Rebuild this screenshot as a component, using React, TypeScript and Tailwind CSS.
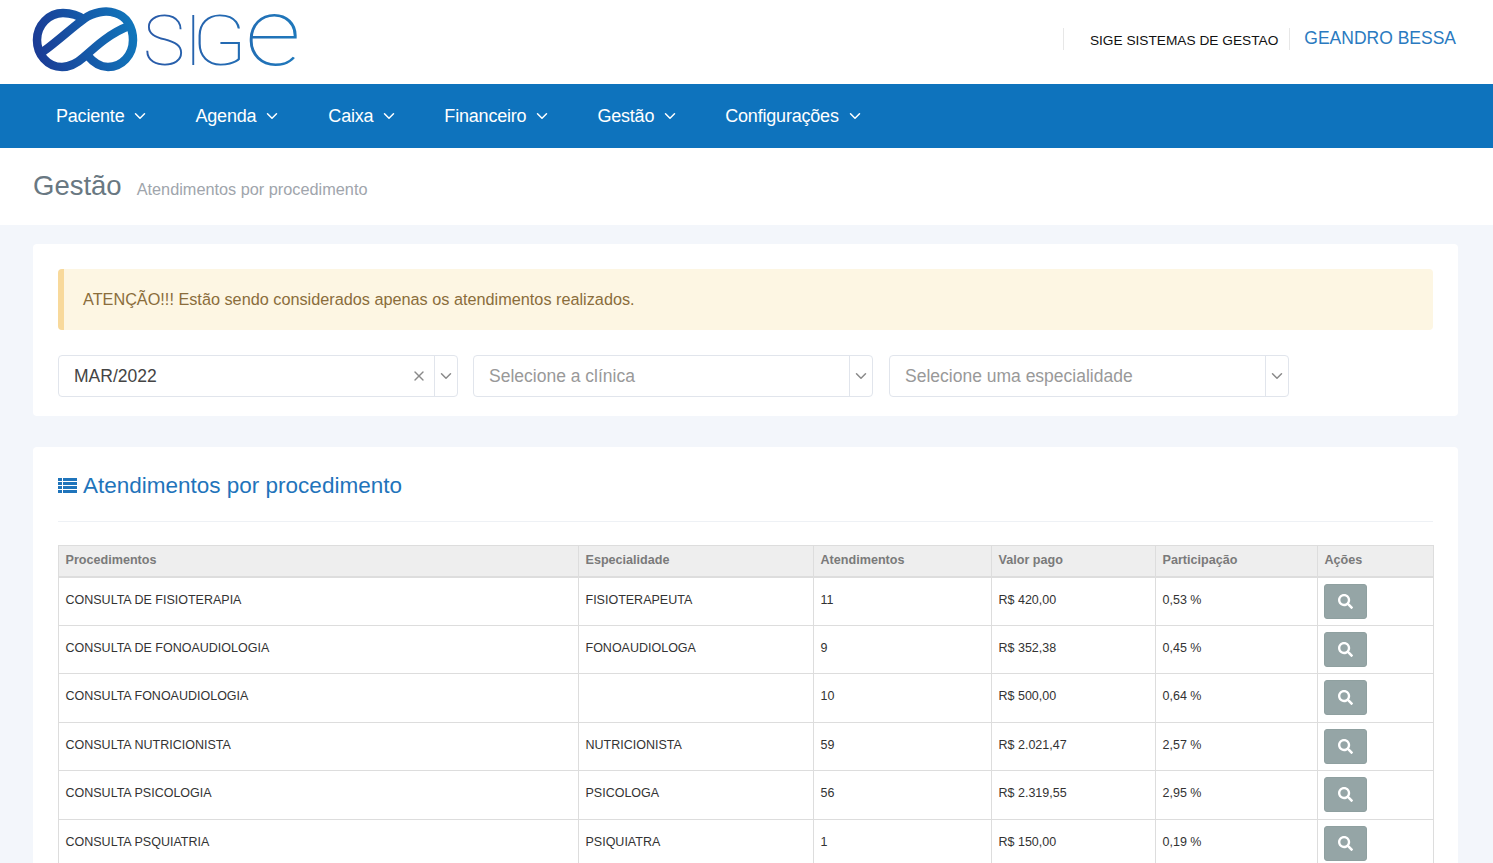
import { ChevronDown, X } from "lucide-react";
import { FaSearch } from "react-icons/fa";

const navItems: [string, string][] = [
  ["Paciente", "mr-[46px]"],
  ["Agenda", "mr-[47px]"],
  ["Caixa", "mr-[46px]"],
  ["Financeiro", "mr-[46px]"],
  ["Gestão", "mr-[46px]"],
  ["Configurações", ""],
];

const rows = [
  ["CONSULTA DE FISIOTERAPIA", "FISIOTERAPEUTA", "11", "R$ 420,00", "0,53 %"],
  ["CONSULTA DE FONOAUDIOLOGIA", "FONOAUDIOLOGA", "9", "R$ 352,38", "0,45 %"],
  ["CONSULTA FONOAUDIOLOGIA", "", "10", "R$ 500,00", "0,64 %"],
  ["CONSULTA NUTRICIONISTA", "NUTRICIONISTA", "59", "R$ 2.021,47", "2,57 %"],
  ["CONSULTA PSICOLOGIA", "PSICOLOGA", "56", "R$ 2.319,55", "2,95 %"],
  ["CONSULTA PSQUIATRIA", "PSIQUIATRA", "1", "R$ 150,00", "0,19 %"],
];

function Logo() {
  return (
    <svg width="270" height="70" viewBox="30 4 270 70" className="mb-[6px] block overflow-visible">
      <defs>
        <linearGradient id="lg" gradientUnits="userSpaceOnUse" x1="33" y1="50" x2="137" y2="30">
          <stop offset="0" stopColor="#1b3a94" />
          <stop offset="1" stopColor="#1077bc" />
        </linearGradient>
        <linearGradient id="lt" gradientUnits="userSpaceOnUse" x1="145" y1="40" x2="296" y2="40">
          <stop offset="0" stopColor="#2a5aa8" />
          <stop offset="1" stopColor="#1f78bb" />
        </linearGradient>
      </defs>
      <g fill="none" stroke="url(#lg)" strokeWidth="8.5">
        <path d="M41 53 C52 46 75 25 84 19 C93 12 106 10 115 13 C127 16 133 28 133 40 C133 55 122 67 108 67 C99 67 93 62 88 56" />
        <path d="M129 26 C110 33 95 47 84 57 C75 65 68 67 62 67 C47 67 37 54 37 40 C37 25 49 13 63 13 C72 13 78 15 85 20" />
      </g>
      <g fill="url(#lt)" fontFamily="Roboto, sans-serif" fontWeight="100" fontSize="71">
        <text x="143" y="65">S</text>
        <text x="184" y="65">I</text>
        <text x="192" y="65" textLength="55" lengthAdjust="spacingAndGlyphs">G</text>
        <text x="245" y="65" fontSize="94" textLength="56" lengthAdjust="spacingAndGlyphs">e</text>
      </g>
    </svg>
  );
}

function ListIcon() {
  return (
    <svg width="19" height="15" viewBox="0 0 19 15" fill="currentColor" className="block">
      <rect x="0" y="0" width="4" height="3" />
      <rect x="5" y="0" width="14" height="3" />
      <rect x="0" y="4" width="4" height="3" />
      <rect x="5" y="4" width="14" height="3" />
      <rect x="0" y="8" width="4" height="3" />
      <rect x="5" y="8" width="14" height="3" />
      <rect x="0" y="12" width="4" height="3" />
      <rect x="5" y="12" width="14" height="3" />
    </svg>
  );
}

function Select({ label, placeholder, clear, className }: { label: string; placeholder?: boolean; clear?: boolean; className: string }) {
  return (
    <div className={`flex h-[42px] w-[400px] items-center rounded border border-[#e1e5ec] bg-white ${className}`}>
      <span className={`flex-1 pl-[15px] text-[17.5px] ${placeholder ? "text-[#999999]" : "text-[#444444]"}`}>{label}</span>
      {clear && <X className="mr-[7px] h-[16px] w-[16px] text-[#8a8a8a]" strokeWidth={2} />}
      <span className="flex h-full w-[23px] items-center justify-center border-l border-[#e1e5ec]">
        <ChevronDown className="h-[18px] w-[18px] text-[#8a8a8a]" strokeWidth={2} />
      </span>
    </div>
  );
}

const th = "border border-[#dddddd] border-b-[2px] bg-[#eeeeee] pb-[1px] px-[6.5px] text-left text-[12.6px] font-bold text-[#7a7a7a] h-[31px] align-middle";
const td = "border border-[#dddddd] px-[6.5px] text-[12.5px] text-[#333333] align-middle h-[48.5px]";

export default function App() {
  return (
    <div className="h-screen overflow-hidden bg-[#f3f6fb] font-['Liberation_Sans',Arial,sans-serif]">
      <header className="flex h-[84px] items-center justify-between bg-white pl-[30px] pr-[37px]">
        <Logo />
        <div className="mb-[6px] flex items-center">
          <span className="flex h-[22px] items-center border-l border-[#e7e7e7] pl-[26px] pr-[11px] pt-[5px] text-[13.7px] text-[#111111]">SIGE SISTEMAS DE GESTAO</span>
          <span className="flex h-[22px] items-center border-l border-[#e7e7e7] pb-[1px] pl-[14px] text-[17.5px] leading-none text-[#2a7ac0]">GEANDRO BESSA</span>
        </div>
      </header>
      <nav className="flex h-[64px] items-center bg-[#0e73bd] pl-[56px] text-[18px] tracking-[-0.2px] text-white">
        {navItems.map(([name, cls]) => (
          <div key={name} className={`flex items-center ${cls}`}>
            <span>{name}</span>
            <ChevronDown className="ml-[7px] h-[18px] w-[18px]" strokeWidth={2} />
          </div>
        ))}
      </nav>
      <div className="flex h-[77px] items-center bg-white pb-[2px] pl-[33px]">
        <span className="text-[27.5px] text-[#697882]">Gestão</span>
        <span className="ml-[15px] mt-[7px] text-[16.3px] text-[#a0a5ac]">Atendimentos por procedimento</span>
      </div>
      <main className="px-[33px] pr-[35px] pt-[19px]">
        <section className="rounded bg-white px-[25px] pt-[25px] pb-[19px]">
          <div className="flex h-[61px] items-center rounded-sm border-l-[6px] border-[#f8d99b] bg-[#fdf6e3] pl-[19px] text-[16.25px] text-[#8a6d3b]">
            ATENÇÃO!!! Estão sendo considerados apenas os atendimentos realizados.
          </div>
          <div className="mt-[25px] flex">
            <Select label="MAR/2022" clear className="" />
            <Select label="Selecione a clínica" placeholder className="ml-[15px]" />
            <Select label="Selecione uma especialidade" placeholder className="ml-[16px]" />
          </div>
        </section>
        <section className="mt-[31px] rounded bg-white px-[25px] pb-[25px]">
          <div className="flex h-[75px] items-center border-b border-[#eef1f5] pt-[3px] text-[#1f74bb]">
            <ListIcon />
            <span className="ml-[6px] text-[22.5px]">Atendimentos por procedimento</span>
          </div>
          <table className="mt-[23px] w-[1375px] table-fixed border-collapse">
            <colgroup>
              <col className="w-[520px]" />
              <col className="w-[235px]" />
              <col className="w-[178px]" />
              <col className="w-[164px]" />
              <col className="w-[162px]" />
              <col className="w-[116px]" />
            </colgroup>
            <thead>
              <tr>
                {["Procedimentos", "Especialidade", "Atendimentos", "Valor pago", "Participação", "Ações"].map((h) => (
                  <th key={h} className={th}>{h}</th>
                ))}
              </tr>
            </thead>
            <tbody>
              {rows.map((r) => (
                <tr key={r[0]}>
                  {r.map((c, i) => (
                    <td key={i} className={`${td} pb-[2px]`}>{c}</td>
                  ))}
                  <td className={td}>
                    <button className="-ml-[1px] flex h-[35px] w-[43px] items-center justify-center rounded-[3px] border border-[#8fa0a0] bg-[#95a5a6] text-white">
                      <FaSearch className="h-[15px] w-[15px]" />
                    </button>
                  </td>
                </tr>
              ))}
            </tbody>
          </table>
        </section>
      </main>
    </div>
  );
}
